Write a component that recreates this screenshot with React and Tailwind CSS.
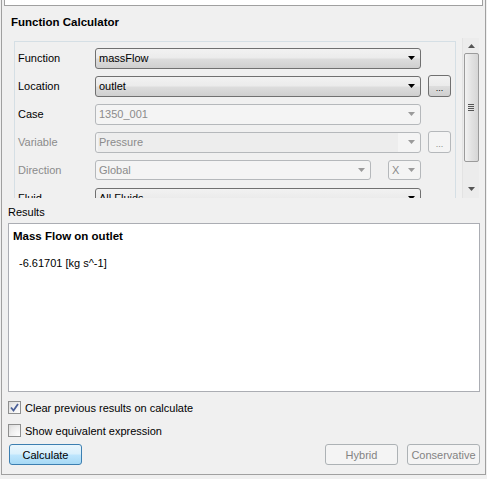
import React from "react"

const enabledBg =
  "bg-[linear-gradient(#f2f2f2_0%,#ebebeb_48%,#dddddd_52%,#cfcfcf_100%)]"

function Arrow({ disabled }) {
  return (
    <svg width="7" height="4" viewBox="0 0 7 4" className="shrink-0">
      <path d="M0 0H7L3.5 4Z" fill={disabled ? "#9a9a9a" : "#000"} />
    </svg>
  )
}

function Combo({ value, disabled, width = "w-[326px]", editable, height = "h-[21px]" }) {
  return (
    <div
      className={`${width} ${height} rounded-[3px] border flex items-center pl-[3px] pr-[5px] ${
        disabled ? "border-[#b5b8bb] bg-[#f4f4f4] text-[#8b8b8b]" : `border-[#707070] ${enabledBg} text-black`
      }`}
    >
      {editable ? (
        <div className="flex-1 h-full flex items-center pl-[1px] bg-[#ededed] mr-[10px] -ml-[1px]">
          {value}
        </div>
      ) : (
        <div className="flex-1">{value}</div>
      )}
      <Arrow disabled={disabled} />
    </div>
  )
}

function Dots({ disabled }) {
  return (
    <div
      className={`w-[23px] h-[22px] rounded-[3px] border flex items-end justify-center pb-[3px] text-[9px] leading-none ${
        disabled ? "border-[#b5b8bb] bg-[#f4f4f4] text-[#8b8b8b]" : `border-[#707070] ${enabledBg} text-black`
      }`}
    >
      ...
    </div>
  )
}

function Row({ label, dim, children }) {
  return (
    <div className="flex items-center h-[28px]">
      <div className={`w-[77px] ${dim ? "text-[#8b8b8b]" : "text-black"}`}>{label}</div>
      {children}
    </div>
  )
}

function CheckBox({ checked, label }) {
  return (
    <div className="flex items-center h-[23px]">
      <div className="w-[13px] h-[13px] border border-[#8e8f8f] bg-[linear-gradient(135deg,#dcdcdc,#ffffff)] p-[2px]">
        <div className="w-full h-full bg-[linear-gradient(135deg,#e6e6e6,#fbfbfb)] flex items-center justify-center">
          {checked && (
            <svg width="9" height="9" viewBox="0 0 9 9" className="-m-[1px]">
              <path d="M1 4.5L3.5 7.5L8 1" fill="none" stroke="#4a5f97" strokeWidth="1.8" />
            </svg>
          )}
        </div>
      </div>
      <span className="ml-[4px]">{label}</span>
    </div>
  )
}

function Scrollbar() {
  return (
    <div className="w-[17px] h-full flex flex-col items-center bg-[#ececec] border-l border-[#e3e3e3]">
      <div className="h-[15px] flex items-center justify-center">
        <svg width="7" height="4" viewBox="0 0 7 4">
          <path d="M0 4H7L3.5 0Z" fill="#555" />
        </svg>
      </div>
      <div className="w-[15px] h-[109px] rounded-[2px] border border-[#9b9b9b] bg-[linear-gradient(90deg,#f2f2f2,#e2e2e2_50%,#d6d6d6)] flex items-center justify-center">
        <div className="flex flex-col gap-[1px]">
          <div className="w-[6px] h-[1px] bg-[#555]" />
          <div className="w-[6px] h-[1px] bg-[#555]" />
          <div className="w-[6px] h-[1px] bg-[#555]" />
          <div className="w-[6px] h-[1px] bg-[#555]" />
        </div>
      </div>
      <div className="flex-1" />
      <div className="h-[18px] flex items-center justify-center">
        <svg width="7" height="4" viewBox="0 0 7 4">
          <path d="M0 0H7L3.5 4Z" fill="#555" />
        </svg>
      </div>
    </div>
  )
}

function Btn({ children, disabled, className = "" }) {
  return (
    <div
      className={`h-[21px] rounded-[3px] border flex items-center justify-center ${
        disabled
          ? "border-[#adb2b5] bg-[#f4f4f4] text-[#838383]"
          : "border-[#3c7fb1] bg-[linear-gradient(#eaf6fd_0%,#d9f0fc_48%,#bee6fd_52%,#a7d9f5_100%)] text-black"
      } ${className}`}
    >
      {children}
    </div>
  )
}

export default function App() {
  return (
    <div
      className="w-[487px] h-[479px] bg-[#f0f0f0] text-[11px] leading-[14px] text-black overflow-hidden"
      style={{ fontFamily: '"Liberation Sans", Arial, sans-serif' }}
    >
      <div className="ml-[1px] w-[485px] h-[475px] border-x border-b border-[#a0a0a0] flex flex-col">
        <div className="mx-[2px] h-[6px] bg-white border-x border-b border-[#a0a0a0]" />

        <div className="mt-[9px] ml-[9px] font-bold text-[11.5px]">Function Calculator</div>

        <div className="mt-[9px] ml-[6px] h-[160px] flex">
          <div className="w-[454px] h-full overflow-hidden pt-[3px] pl-[6px]">
            <div className="w-[442px] border border-[#d5dfe5] pt-[2px] pl-[3px]">
              <Row label="Function">
                <Combo value="massFlow" />
              </Row>
              <Row label="Location">
                <Combo value="outlet" />
                <div className="ml-[7px]">
                  <Dots />
                </div>
              </Row>
              <Row label="Case">
                <Combo value="1350_001" disabled />
              </Row>
              <Row label="Variable" dim>
                <Combo value="Pressure" disabled editable />
                <div className="ml-[7px]">
                  <Dots disabled />
                </div>
              </Row>
              <Row label="Direction" dim>
                <Combo value="Global" disabled width="w-[276px]" height="h-[20px]" />
                <div className="ml-[17px]">
                  <Combo value="X" disabled width="w-[33px]" height="h-[20px]" />
                </div>
              </Row>
              <Row label="Fluid">
                <Combo value="All Fluids" />
              </Row>
            </div>
          </div>
          <Scrollbar />
        </div>

        <div className="mt-[7px] ml-[6px]">Results</div>

        <div className="mt-[4px] ml-[6px] w-[472px] h-[169px] bg-white border border-[#abadb3] pt-[5px] pl-[4px]">
          <div className="font-bold text-[11.5px]">Mass Flow on outlet</div>
          <div className="mt-[13px] ml-[6px]">-6.61701 [kg s^-1]</div>
        </div>

        <div className="mt-[4px] ml-[6px]">
          <CheckBox checked label="Clear previous results on calculate" />
          <CheckBox label="Show equivalent expression" />
        </div>

        <div className="mt-[2px] ml-[7px] mr-[5px] flex">
          <Btn className="w-[73px]">Calculate</Btn>
          <div className="flex-1" />
          <Btn disabled className="w-[73px]">Hybrid</Btn>
          <Btn disabled className="w-[73px] ml-[9px]">Conservative</Btn>
        </div>
      </div>
    </div>
  )
}
